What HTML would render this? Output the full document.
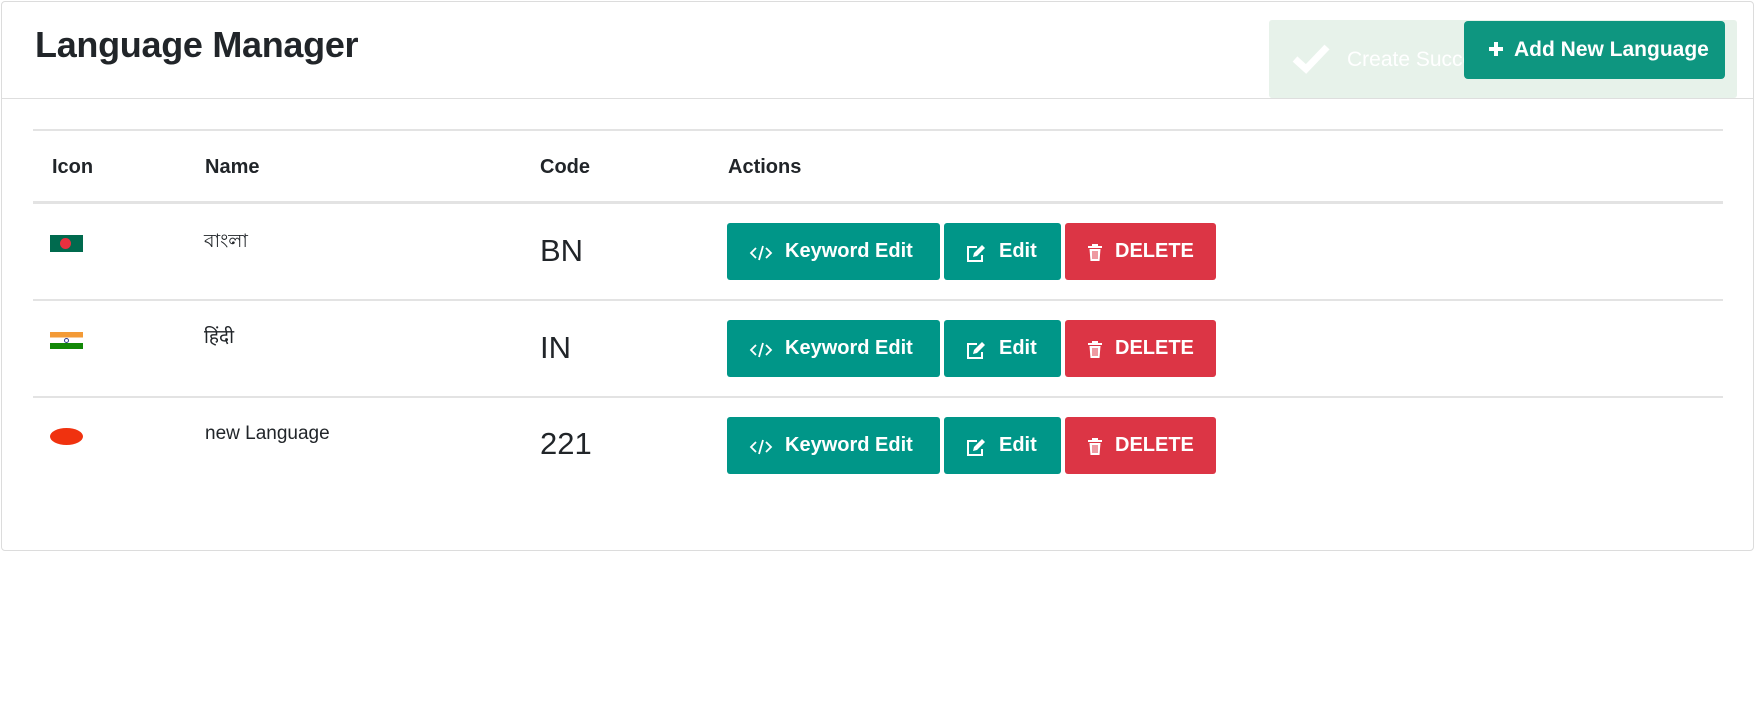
<!DOCTYPE html>
<html><head><meta charset="utf-8"><style>
*{box-sizing:border-box;margin:0;padding:0}
body{width:1755px;height:718px;background:#fff;font-family:"Liberation Sans","Noto Sans CJK SC",sans-serif;color:#212529;position:relative;overflow:hidden}
.card{position:absolute;left:1px;top:1px;width:1753px;height:550px;border:1px solid #dcdcdc;border-radius:4px}
.hdr{position:absolute;left:0;top:0;width:100%;height:97px;border-bottom:1px solid #dedede}
h1{position:absolute;left:33px;top:22px;font-size:36px;font-weight:bold;letter-spacing:-0.3px}
.toast{position:absolute;left:1267px;top:18px;width:468px;height:78px;background:#e7f2ea;border-radius:3px}
.toast span{position:absolute;left:78px;top:28px;color:#fff;font-size:21px}
.add{position:absolute;left:1462px;top:19px;width:261px;height:58px;background:#0e9680;border-radius:4px;color:#fff;font-size:21px;font-weight:bold;line-height:58px;padding-left:24px}
.line{position:absolute;left:33px;width:1690px;background:#e3e3e3}
.t{position:absolute;font-size:19px}
.b{position:absolute;height:57px;border-radius:3px;color:#fff;font-weight:bold;font-size:20px;line-height:57px;background:#009688}
.b svg{position:absolute;top:20px}
.del{background:#dc3545}
</style></head><body>
<div class="card">
<div class="hdr"></div>
<h1>Language Manager</h1>
<div class="toast"><svg style="position:absolute;left:22px;top:22px" width="40" height="32" viewBox="0 0 40 32"><path d="M4 17 L15 27 L36 5" fill="none" stroke="#fff" stroke-width="7"/></svg><span>Create Successfully</span></div>
<div class="add"><svg width="16" height="16" viewBox="0 0 16 16" style="vertical-align:-1px;margin-right:10px"><path d="M8 1v14M1 8h14" stroke="#fff" stroke-width="4"/></svg>Add New Language</div>
</div>
<div class="line" style="top:129px;height:2px"></div>
<div class="t" style="left:52px;top:156px;font-weight:bold;font-size:20px">Icon</div>
<div class="t" style="left:205px;top:156px;font-weight:bold;font-size:20px">Name</div>
<div class="t" style="left:540px;top:156px;font-weight:bold;font-size:20px">Code</div>
<div class="t" style="left:728px;top:156px;font-weight:bold;font-size:20px">Actions</div>
<div class="line" style="top:201px;height:3px"></div>
<div class="line" style="top:299px;height:2px"></div>
<div class="line" style="top:396px;height:2px"></div>

<div style="position:absolute;left:50px;top:235px;width:33px;height:17px;background:#006a4e"><div style="position:absolute;left:10px;top:3px;width:11px;height:11px;border-radius:50%;background:#e8303f"></div></div>
<div style="position:absolute;left:50px;top:332px;width:33px;height:17px;background:linear-gradient(#f39a36 0 33%,#fff 33% 66%,#128807 66%)"><div style="position:absolute;left:14px;top:6px;width:5px;height:5px;border-radius:50%;border:1px solid #2b3a8c"></div></div>
<div style="position:absolute;left:50px;top:428px;width:33px;height:17px;border-radius:50%;background:#f0320f"></div>

<div class="t" style="left:204px;top:227px;font-family:'Liberation Sans','DejaVu Sans',sans-serif">বাংলা</div>
<div class="t" style="left:204px;top:323px;font-family:'Liberation Sans','DejaVu Sans',sans-serif">हिंदी</div>
<div class="t" style="left:205px;top:423px">new Language</div>
<div class="t" style="left:540px;top:233px;font-size:31px">BN</div>
<div class="t" style="left:540px;top:330px;font-size:31px">IN</div>
<div class="t" style="left:540px;top:426px;font-size:31px">221</div>

<div id="rows"></div>
<script>
var h='';[223,320,417].forEach(function(y){
h+='<div class="b" style="left:727px;top:'+y+'px;width:213px;padding-left:58px"><svg style="left:22px" width="24" height="18" viewBox="0 0 24 18"><path d="M7 5 L2 10 L7 15 M17 5 L22 10 L17 15 M14 3 L10 17" fill="none" stroke="#fff" stroke-width="1.8"/></svg>Keyword Edit</div>';
h+='<div class="b" style="left:944px;top:'+y+'px;width:117px;padding-left:55px"><svg style="left:21px" width="22" height="20" viewBox="0 0 22 20"><path d="M12 4H3v14h14v-6" fill="none" stroke="#fff" stroke-width="2"/><path d="M8 14l1-4 8-8 3 3-8 8z" fill="#fff"/></svg>Edit</div>';
h+='<div class="b del" style="left:1065px;top:'+y+'px;width:151px;padding-left:50px"><svg style="left:22px" width="16" height="19" viewBox="0 0 16 19"><path d="M1 4h14M6 4V2h4v2" fill="none" stroke="#fff" stroke-width="2"/><path d="M2.5 6h11l-1 12h-9z" fill="#fff"/><path d="M6 8v8M8 8v8M10 8v8" stroke="#dc3545" stroke-width="1"/></svg>DELETE</div>';
});document.getElementById('rows').innerHTML=h;
</script>
</body></html>
